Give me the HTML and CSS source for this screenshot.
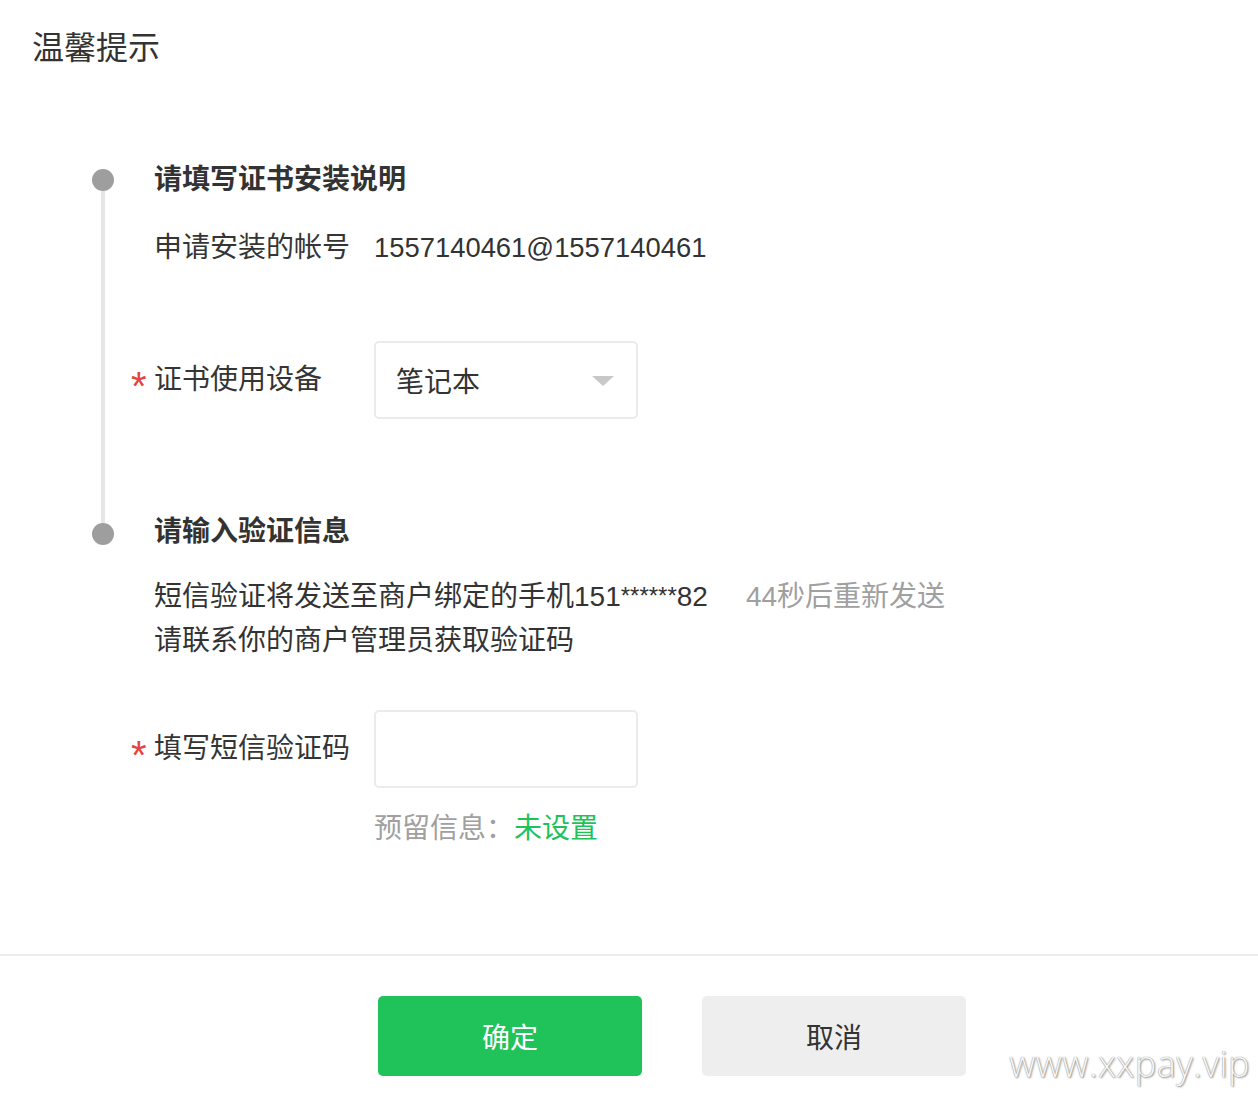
FILE: index.html
```html
<!DOCTYPE html>
<html lang="zh-CN">
<head>
<meta charset="utf-8">
<title>温馨提示</title>
<link rel="stylesheet" href="styles.css">
</head>
<body>
<div class="dialog">
  <div class="header"><h1 class="title">温馨提示</h1></div>
  <div class="steps">
    <div class="step step-first">
      <div class="rail">
        <div class="rail-top"></div>
        <div class="dot"></div>
        <div class="rail-line"></div>
      </div>
      <div class="step-body">
        <h2 class="step-title">请填写证书安装说明</h2>
        <div class="info-row">
          <span class="info-label">申请安装的帐号</span>
          <span class="info-value">1557140461@1557140461</span>
        </div>
        <div class="form-row form-row-select">
          <label class="form-label"><span class="req">*</span>证书使用设备</label>
          <div class="select">
            <span class="select-text">笔记本</span>
            <span class="select-arrow"></span>
          </div>
        </div>
      </div>
    </div>
    <div class="step step-last">
      <div class="rail">
        <div class="rail-top rail-top-line"></div>
        <div class="dot"></div>
      </div>
      <div class="step-body">
        <h2 class="step-title">请输入验证信息</h2>
        <p class="desc">短信验证将发送至商户绑定的手机151<span class="stars">******</span>82<span class="countdown">44秒后重新发送</span></p>
        <p class="desc">请联系你的商户管理员获取验证码</p>
        <div class="form-row form-row-input">
          <label class="form-label"><span class="req">*</span>填写短信验证码</label>
          <div class="input"></div>
        </div>
        <div class="hint-row">
          <span class="hint-label">预留信息：</span><span class="hint-value">未设置</span>
        </div>
      </div>
    </div>
  </div>
  <div class="footer">
    <button class="btn btn-primary">确定</button>
    <button class="btn btn-default">取消</button>
  </div>
  <div class="watermark">www.xxpay.vip</div>
</div>
</body>
</html>
```
FILE: styles.css
```css
html, body {
  margin: 0;
  padding: 0;
  background: #fff;
}
body {
  font-family: "Liberation Sans", "Noto Sans CJK SC", sans-serif;
  color: #353535;
  font-size: 28px;
}
.dialog {
  position: relative;
  width: 1258px;
  height: 1096px;
  overflow: hidden;
}
.header {
  padding: 26px 32px 0;
}
.title {
  margin: 0;
  font-size: 32px;
  line-height: 44px;
  font-weight: normal;
  color: #333;
}
.steps {
  padding: 88px 0 0 92px;
}
.step {
  display: flex;
}
.rail {
  width: 62px;
  display: flex;
  flex-direction: column;
  align-items: flex-start;
  flex-shrink: 0;
}
.rail-top {
  height: 11px;
  width: 4px;
  margin-left: 9px;
}
.rail-top-line {
  height: 13px;
  background: #e6e6e6;
}
.dot {
  width: 22px;
  height: 22px;
  border-radius: 50%;
  background: #9e9e9e;
}
.rail-line {
  flex: 1;
  width: 4px;
  margin-left: 9px;
  background: #e6e6e6;
}
.step-first .step-body {
  padding-bottom: 91px;
}
.step-body {
  flex: 1;
}
.step-title {
  margin: 0;
  font-size: 28px;
  line-height: 44px;
  font-weight: bold;
  color: #333;
}
.info-row {
  margin-top: 24px;
  display: flex;
  line-height: 44px;
}
.info-label {
  width: 220px;
}
.info-value {
  font-size: 27.4px;
  color: #333;
}
.form-row {
  display: flex;
  align-items: center;
}
.form-row-select {
  margin-top: 71px;
}
.form-row-input {
  margin-top: 47px;
}
.form-label {
  width: 241px;
  margin-left: -21px;
  display: flex;
  align-items: center;
  line-height: 44px;
}
.req {
  width: 21px;
  color: #e64340;
  font-family: "Liberation Sans", sans-serif;
  font-size: 40px;
  line-height: 1;
  padding-top: 12px;
  margin-left: -2px;
  margin-right: 2px;
}
.select, .input {
  box-sizing: border-box;
  width: 264px;
  height: 78px;
  border: 2px solid #ebebeb;
  border-radius: 5px;
  background: #fff;
}
.select {
  display: flex;
  align-items: center;
  justify-content: space-between;
  padding: 0 22px 0 20px;
}
.select-text {
  color: #333;
}
.select-arrow {
  width: 0;
  height: 0;
  border-left: 11px solid transparent;
  border-right: 11px solid transparent;
  border-top: 10px solid #c8c8c8;
  margin-top: 2px;
}
.desc {
  margin: 0;
  line-height: 44px;
  color: #333;
}
.step-title + .desc {
  margin-top: 20px;
}
.stars {
  font-size: 24px;
  vertical-align: 2px;
}
.countdown {
  margin-left: 38px;
  color: #a0a0a0;
}
.hint-row {
  margin-top: 19px;
  padding-left: 220px;
  line-height: 44px;
}
.hint-label {
  color: #a0a0a0;
}
.hint-value {
  color: #1fc25a;
}
.footer {
  margin-top: 103px;
  border-top: 2px solid #ebebeb;
  padding: 40px 0 0 378px;
  display: flex;
  gap: 60px;
}
.btn {
  width: 264px;
  height: 80px;
  border: none;
  border-radius: 5px;
  font-family: "Liberation Sans", "Noto Sans CJK SC", sans-serif;
  font-size: 28px;
  cursor: pointer;
}
.btn-primary {
  background: #1fc35a;
  color: #fff;
}
.btn-default {
  background: #eeeeee;
  color: #333;
}
.watermark {
  position: absolute;
  right: 8px;
  bottom: 8px;
  font-family: "Open Sans", sans-serif;
  font-weight: 300;
  font-size: 36px;
  color: #f6f6f6;
  text-shadow: 0 0 1px #777, 1px 1px 2px #999;
  letter-spacing: 0.5px;
}
```
